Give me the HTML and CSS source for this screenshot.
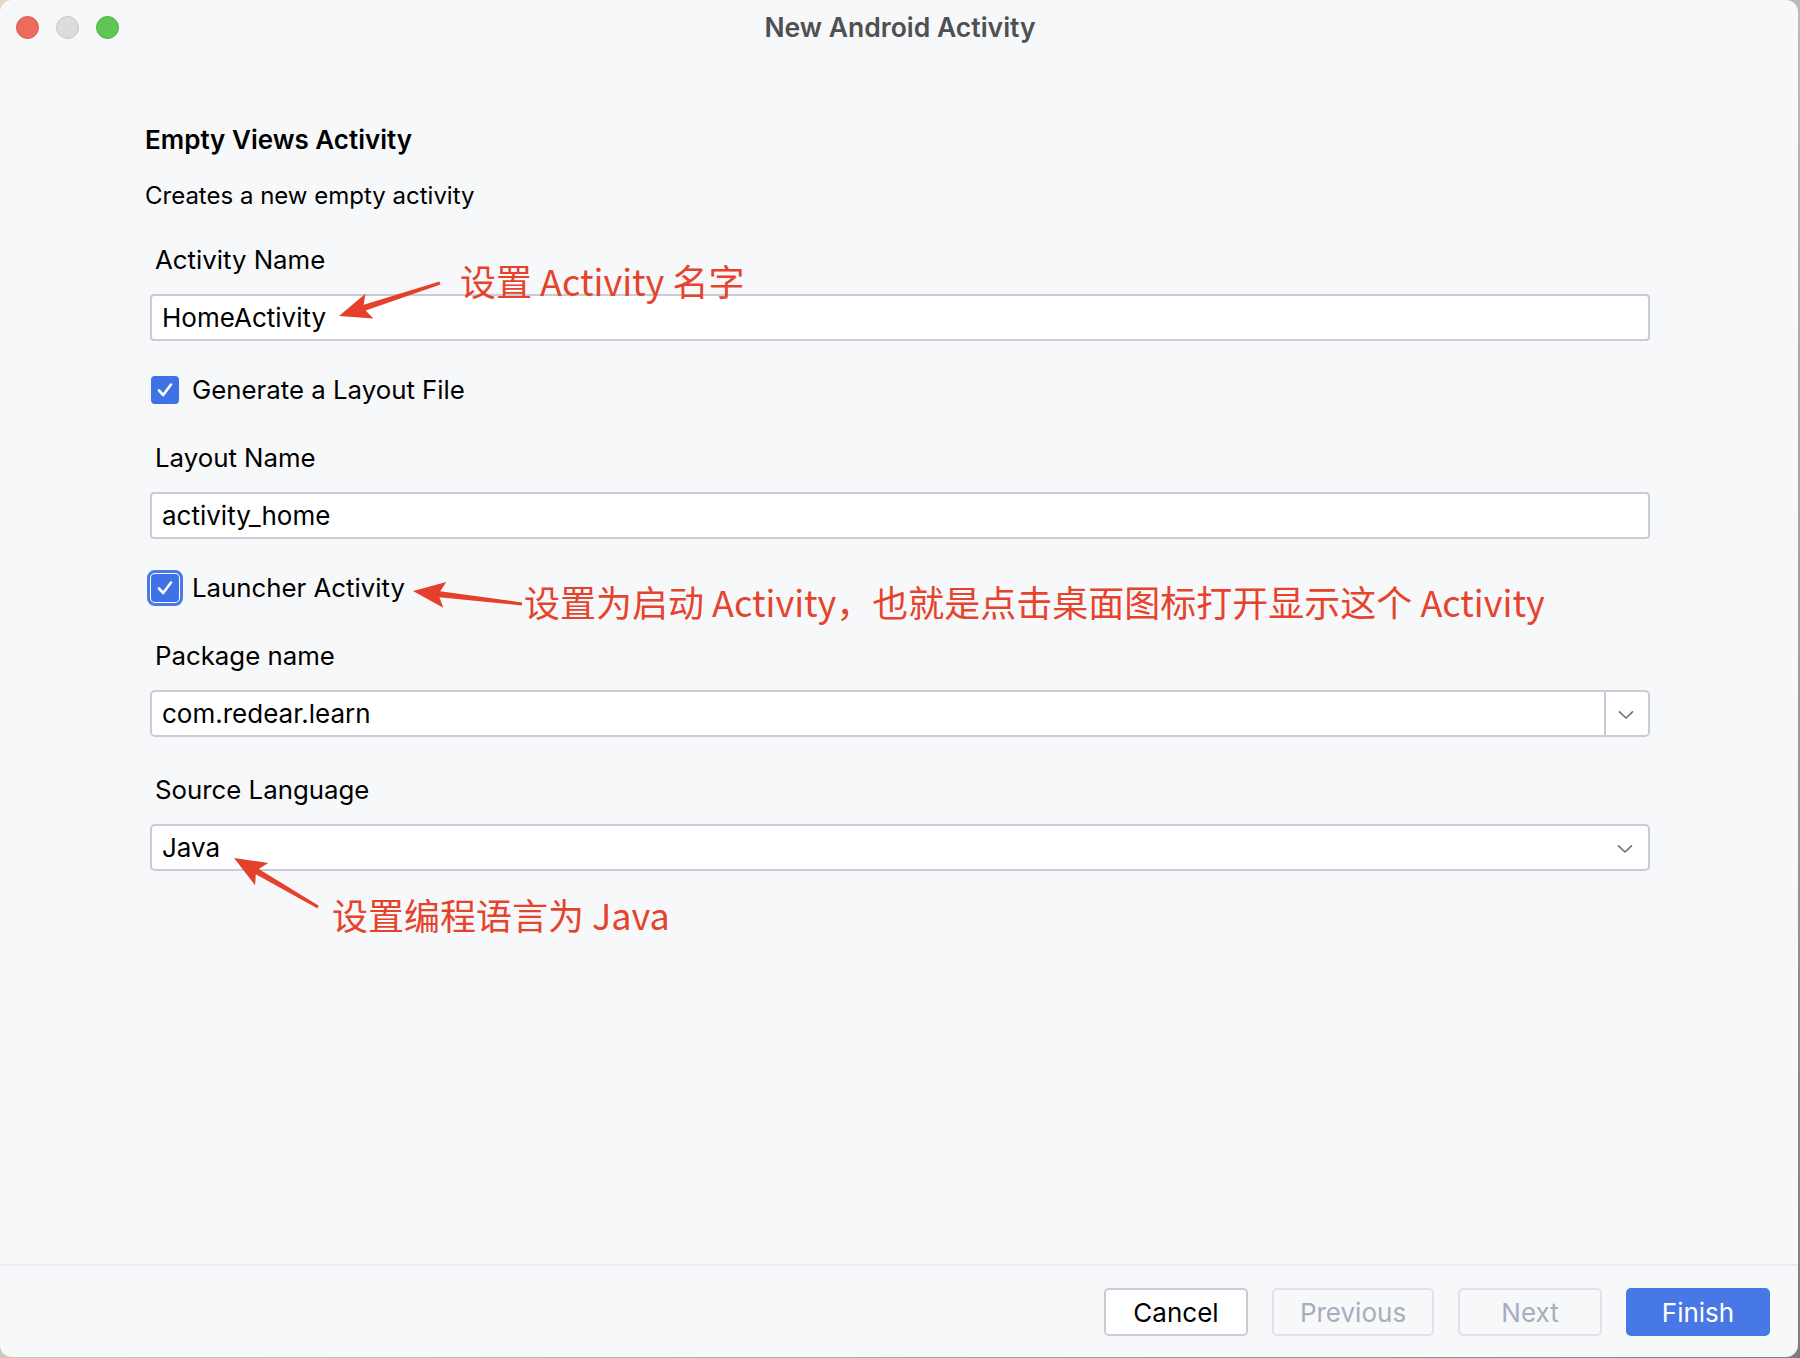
FILE: index.html
```html
<!DOCTYPE html>
<html lang="zh-CN">
<head>
<meta charset="utf-8">
<title>New Android Activity</title>
<link rel="stylesheet" href="styles.css">
</head>
<body>
<div class="window">
  <header class="titlebar">
    <div class="lights">
      <span class="light red"></span>
      <span class="light gray"></span>
      <span class="light green"></span>
    </div>
    <div class="title">New Android Activity</div>
    <div></div>
  </header>

  <main class="content">
    <h1 class="heading">Empty Views Activity</h1>
    <p class="desc">Creates a new empty activity</p>

    <div class="field first">
      <div class="label">Activity Name</div>
      <div class="input">HomeActivity</div>
    </div>

    <div class="check-row">
      <span class="cb"><svg viewBox="0 0 28 28" width="28" height="28"><path d="M8 14.5 L12.2 19 L20 8.5" fill="none" stroke="#fff" stroke-width="2.6" stroke-linecap="round" stroke-linejoin="round"/></svg></span>
      <span class="cb-label">Generate a Layout File</span>
    </div>

    <div class="field">
      <div class="label">Layout Name</div>
      <div class="input">activity_home</div>
    </div>

    <div class="check-row">
      <span class="cb focus"><svg viewBox="0 0 28 28" width="28" height="28"><path d="M8 14.5 L12.2 19 L20 8.5" fill="none" stroke="#fff" stroke-width="2.6" stroke-linecap="round" stroke-linejoin="round"/></svg></span>
      <span class="cb-label">Launcher Activity</span>
    </div>

    <div class="field">
      <div class="label">Package name</div>
      <div class="input combo divided">
        <span class="combo-text">com.redear.learn</span>
        <span class="combo-btn"><svg viewBox="0 0 16 10" width="16" height="10"><path d="M1.5 1.8 L8 8 L14.5 1.8" fill="none" stroke="#6c707e" stroke-width="1.6" stroke-linecap="round" stroke-linejoin="round"/></svg></span>
      </div>
    </div>

    <div class="field">
      <div class="label">Source Language</div>
      <div class="input combo">
        <span class="combo-text">Java</span>
        <span class="combo-btn"><svg viewBox="0 0 16 10" width="16" height="10"><path d="M1.5 1.8 L8 8 L14.5 1.8" fill="none" stroke="#6c707e" stroke-width="1.6" stroke-linecap="round" stroke-linejoin="round"/></svg></span>
      </div>
    </div>
  </main>

  <footer class="footer">
    <button class="btn cancel">Cancel</button>
    <button class="btn disabled prev">Previous</button>
    <button class="btn disabled next">Next</button>
    <button class="btn primary finish">Finish</button>
  </footer>

  <svg class="arrows" viewBox="0 0 1800 1358" width="1800" height="1358">
    <polygon points="339,316 373.4,318.5 365.6,310.5 440.5,284.4 439.5,281.6 363.7,304.8 365.4,293.7" />
    <polygon points="413,591 443.3,607.7 439.4,597.2 521.8,605.5 522.2,602.5 440.2,591.2 446.3,581.9" />
    <polygon points="234,858 255.1,885.3 255.8,874.2 317.2,908.3 318.8,905.7 258.8,869.0 268.2,862.9" />
  </svg>

  <div class="note note1">设置 Activity 名字</div>
  <div class="note note2">设置为启动 Activity，也就是点击桌面图标打开显示这个 Activity</div>
  <div class="note note3">设置编程语言为 Java</div>
</div>
</body>
</html>
```

FILE: styles.css
```css
* { box-sizing: border-box; }

html, body {
  margin: 0;
  padding: 0;
}

body {
  width: 1800px;
  height: 1358px;
  background: linear-gradient(135deg, #e4d8c2 0%, #c9c4bb 50%, #7d7d7f 100%);
  font-family: Inter, "Noto Sans", sans-serif;
  color: #000;
  overflow: hidden;
}

.window {
  position: relative;
  width: 1798px;
  height: 1357px;
  background: #f7f8fa;
  border-radius: 12px;
  display: flex;
  flex-direction: column;
  overflow: hidden;
}

/* title bar */
.titlebar {
  height: 54px;
  display: grid;
  grid-template-columns: 1fr auto 1fr;
  align-items: center;
  flex: none;
}

.lights {
  display: flex;
  gap: 17px;
  padding-left: 16px;
  padding-top: 1px;
}

.light {
  width: 23px;
  height: 23px;
  border-radius: 50%;
  display: block;
}
.light.red { background: #ed6a5e; border: 1px solid #d8574b; }
.light.gray { background: #dcdcde; border: 1px solid #c8c8cb; }
.light.green { background: #61c554; border: 1px solid #52ad46; }

.title {
  font-size: 26.5px;
  font-weight: 600;
  color: #4f5052;
  margin-top: 0;
  padding-left: 2px;
}

/* content */
.content {
  flex: 1;
  padding: 70px 150px 0 145px;
  display: flex;
  flex-direction: column;
}

.heading {
  margin: 0;
  font-size: 26px;
  line-height: 32px;
  font-weight: 600;
  color: #000;
}

.desc {
  margin: 25px 0 0;
  font-size: 24px;
  line-height: 30px;
  color: #000;
}

.field {
  margin-top: 38px;
  margin-left: 5px;
}
.field.first { margin-top: 34px; }

.label {
  font-size: 25.8px;
  line-height: 30px;
  padding-left: 5px;
  color: #000;
}

.input {
  margin-top: 19px;
  height: 47px;
  width: 1500px;
  background: #fff;
  border: 2px solid #c9ccd6;
  border-radius: 4px;
  font-size: 26px;
  line-height: 43px;
  padding-left: 10px;
  color: #000;
}

.combo {
  display: flex;
  padding-left: 0;
  border-radius: 5px;
}
.combo-text {
  flex: 1;
  padding-left: 10px;
}
.combo-btn {
  width: 44px;
  display: flex;
  align-items: center;
  justify-content: center;
  padding-top: 2px;
  padding-right: 2px;
}
.combo.divided .combo-btn {
  border-left: 2px solid #c9ccd6;
  width: 44px;
}

.check-row {
  margin-top: 34px;
  margin-left: 6px;
  height: 30px;
  display: flex;
  align-items: center;
  gap: 13px;
}

.cb {
  width: 28px;
  height: 28px;
  border-radius: 4px;
  background: #3f72e6;
  display: flex;
  align-items: center;
  justify-content: center;
}
.cb.focus {
  outline: 3px solid #4a7ae8;
  outline-offset: 1px;
  box-shadow: 0 0 0 1px #fff;
  border-radius: 4px;
}

.cb-label {
  font-size: 25.8px;
  line-height: 30px;
  color: #000;
}

/* footer */
.footer {
  flex: none;
  height: 93px;
  border-top: 2px solid #ebecf0;
  display: flex;
  justify-content: flex-end;
  align-items: flex-start;
  gap: 24px;
  padding: 22px 28px 0 0;
}

.btn {
  height: 48px;
  border-radius: 5px;
  font-family: Inter, "Noto Sans", sans-serif;
  font-size: 26px;
  padding: 0;
  background: #fff;
  border: 2px solid #c9ccd6;
  color: #000;
}
.btn.cancel { width: 144px; }
.btn.prev { width: 162px; }
.btn.next { width: 144px; }
.btn.finish { width: 144px; }

.btn.disabled {
  background: #f7f8fa;
  border-color: #e0e2e7;
  color: #a8adbd;
}
.btn.primary {
  background: #4877e6;
  border-color: #4877e6;
  color: #fff;
}

/* annotations */
.arrows {
  position: absolute;
  left: 0;
  top: 0;
  pointer-events: none;
}
.arrows polygon { fill: #e4402b; }

.note {
  position: absolute;
  font-family: "Noto Sans CJK SC", "Noto Sans", sans-serif;
  font-size: 36px;
  line-height: 40px;
  color: #e6432d;
  white-space: nowrap;
}
.note1 { left: 460px; top: 260px; }
.note2 { left: 524px; top: 581px; }
.note3 { left: 332px; top: 894px; }
```
